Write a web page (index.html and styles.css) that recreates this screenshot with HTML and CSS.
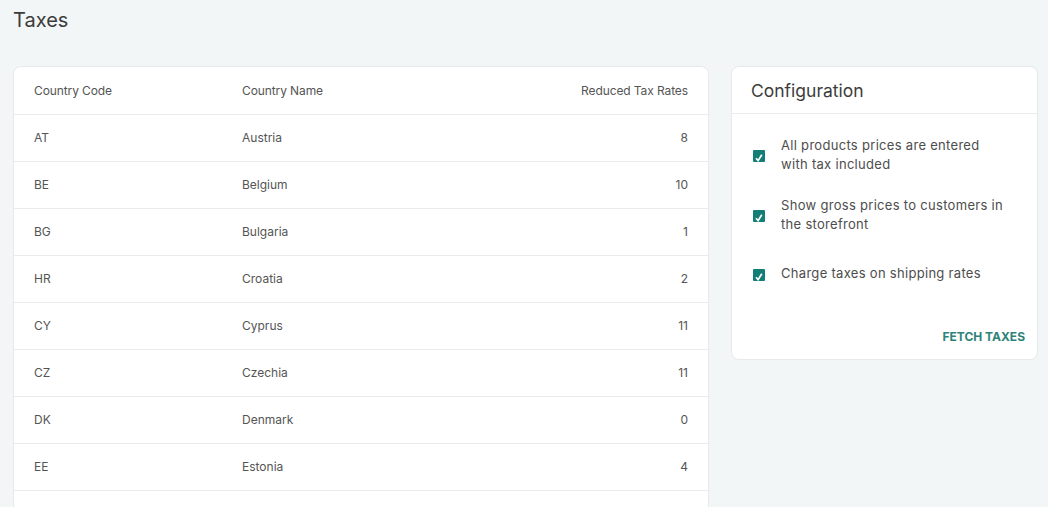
FILE: index.html
```html
<!DOCTYPE html>
<html>
<head>
<meta charset="utf-8">
<link rel="stylesheet" href="styles.css">
</head>
<body>
<div class="page">
  <h1 class="title">Taxes</h1>
  <div class="layout">
    <div class="card table-card">
      <table class="tax-table">
        <thead>
          <tr><th class="c-code">Country Code</th><th class="c-name">Country Name</th><th class="c-rate">Reduced Tax Rates</th></tr>
        </thead>
        <tbody>
          <tr><td>AT</td><td>Austria</td><td class="c-rate">8</td></tr>
          <tr><td>BE</td><td>Belgium</td><td class="c-rate">10</td></tr>
          <tr><td>BG</td><td>Bulgaria</td><td class="c-rate">1</td></tr>
          <tr><td>HR</td><td>Croatia</td><td class="c-rate">2</td></tr>
          <tr><td>CY</td><td>Cyprus</td><td class="c-rate">11</td></tr>
          <tr><td>CZ</td><td>Czechia</td><td class="c-rate">11</td></tr>
          <tr><td>DK</td><td>Denmark</td><td class="c-rate">0</td></tr>
          <tr><td>EE</td><td>Estonia</td><td class="c-rate">4</td></tr>
        </tbody>
      </table>
    </div>
    <div class="config-col">
      <div class="card config-card">
        <div class="config-head">Configuration</div>
        <div class="config-body">
          <div class="opt"><span class="cb"><svg viewBox="0 0 12 12" width="12" height="12"><path d="M3 8.2 L5.1 10.6 L8.8 4.8" fill="none" stroke="#fff" stroke-width="1.7"/></svg></span><span class="opt-label">All products prices are entered with tax included</span></div>
          <div class="opt"><span class="cb"><svg viewBox="0 0 12 12" width="12" height="12"><path d="M3 8.2 L5.1 10.6 L8.8 4.8" fill="none" stroke="#fff" stroke-width="1.7"/></svg></span><span class="opt-label">Show gross prices to customers in the storefront</span></div>
          <div class="opt single"><span class="cb"><svg viewBox="0 0 12 12" width="12" height="12"><path d="M3 8.2 L5.1 10.6 L8.8 4.8" fill="none" stroke="#fff" stroke-width="1.7"/></svg></span><span class="opt-label">Charge taxes on shipping rates</span></div>
        </div>
        <div class="config-foot"><button class="fetch">FETCH TAXES</button></div>
      </div>
    </div>
  </div>
</div>
</body>
</html>
```
FILE: styles.css
```css
* { box-sizing: border-box; }
html, body { margin: 0; padding: 0; }
body {
  background: #f3f6f6;
  font-family: Inter, "Noto Sans", sans-serif;
  color: #4a4a4a;
  height: 507px;
  overflow: hidden;
}
.page { padding: 0 10px 0 13px; }
.title {
  margin: 0;
  padding-top: 8px;
  height: 66px;
  font-size: 20px;
  font-weight: 400;
  line-height: 24px;
  color: #3c3c3c;
}
.layout {
  display: grid;
  grid-template-columns: 696px 307px;
  gap: 22px;
  align-items: start;
}
.card {
  background: #fff;
  border: 1px solid #e6eaea;
  border-radius: 8px;
}
.table-card { height: 460px; overflow: hidden; }
.tax-table {
  width: 100%;
  border-collapse: collapse;
  font-size: 12px;
  color: #555;
}
.tax-table th, .tax-table td {
  height: 47px;
  padding: 0 20px;
  text-align: left;
  font-weight: 400;
  border-bottom: 1px solid #e8ecec;
}
.tax-table thead th { height: 47px; letter-spacing: -0.1px; }
.tax-table .c-code { width: 208px; }
.tax-table .c-rate { text-align: right; }
.config-head {
  height: 47px;
  padding: 0 19px;
  display: flex;
  align-items: center;
  font-size: 17.5px;
  color: #3c3c3c;
  border-bottom: 1px solid #e8ecec;
}
.config-body { padding: 22px 20px 0 21px; }
.opt {
  display: flex;
  align-items: center;
  gap: 16px;
  margin-bottom: 22px;
}
.opt.single { margin-bottom: 0; padding-top: 8px; }
.cb {
  flex: none;
  width: 12px;
  height: 12px;
  background: #137e75;
  border-radius: 1px;
  display: block;
  margin-top: 2px;
}
.cb svg { display: block; }
.opt-label {
  font-size: 13px;
  line-height: 19px;
  letter-spacing: 0.3px;
  color: #4d4d4d;
  max-width: 225px;
}
.config-foot {
  display: flex;
  justify-content: flex-end;
  padding: 46px 12px 14px;
}
.fetch {
  border: 0;
  background: none;
  font-family: inherit;
  font-size: 12px;
  font-weight: 700;
  letter-spacing: 0;
  color: #2e8279;
  padding: 0;
  line-height: 16px;
}
```
